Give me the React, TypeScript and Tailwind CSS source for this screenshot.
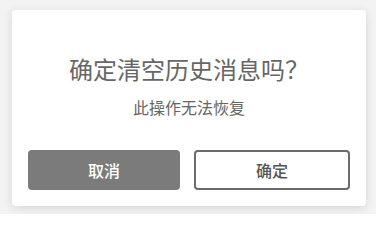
import React from "react";

export default function App() {
  return (
    <div
      className="w-[376px] h-[214px] bg-[#f3f3f3] pt-[10px] pl-[12px]"
      style={{ fontFamily: '"Noto Sans CJK SC", "Noto Sans", sans-serif' }}
    >
      <div className="w-[354px] h-[196px] bg-white rounded-[4px] shadow-[0_2px_10px_rgba(0,0,0,0.12)] flex flex-col items-center px-[16px] pb-[16px]">
        <div className="mt-[45px] text-[24px] leading-[28px] text-[#666666]">确定清空历史消息吗？</div>
        <div className="mt-[14px] text-[16px] leading-[20px] text-[#666666]">此操作无法恢复</div>
        <div className="mt-auto flex w-full gap-[14px]">
          <button className="flex-1 h-[40px] rounded-[4px] bg-[#7b7b7b] text-white text-[16px] font-medium">取消</button>
          <button className="flex-1 h-[40px] rounded-[4px] border-2 border-[#6b6b6b] bg-white text-[#555555] text-[16px] font-medium">确定</button>
        </div>
      </div>
    </div>
  );
}
